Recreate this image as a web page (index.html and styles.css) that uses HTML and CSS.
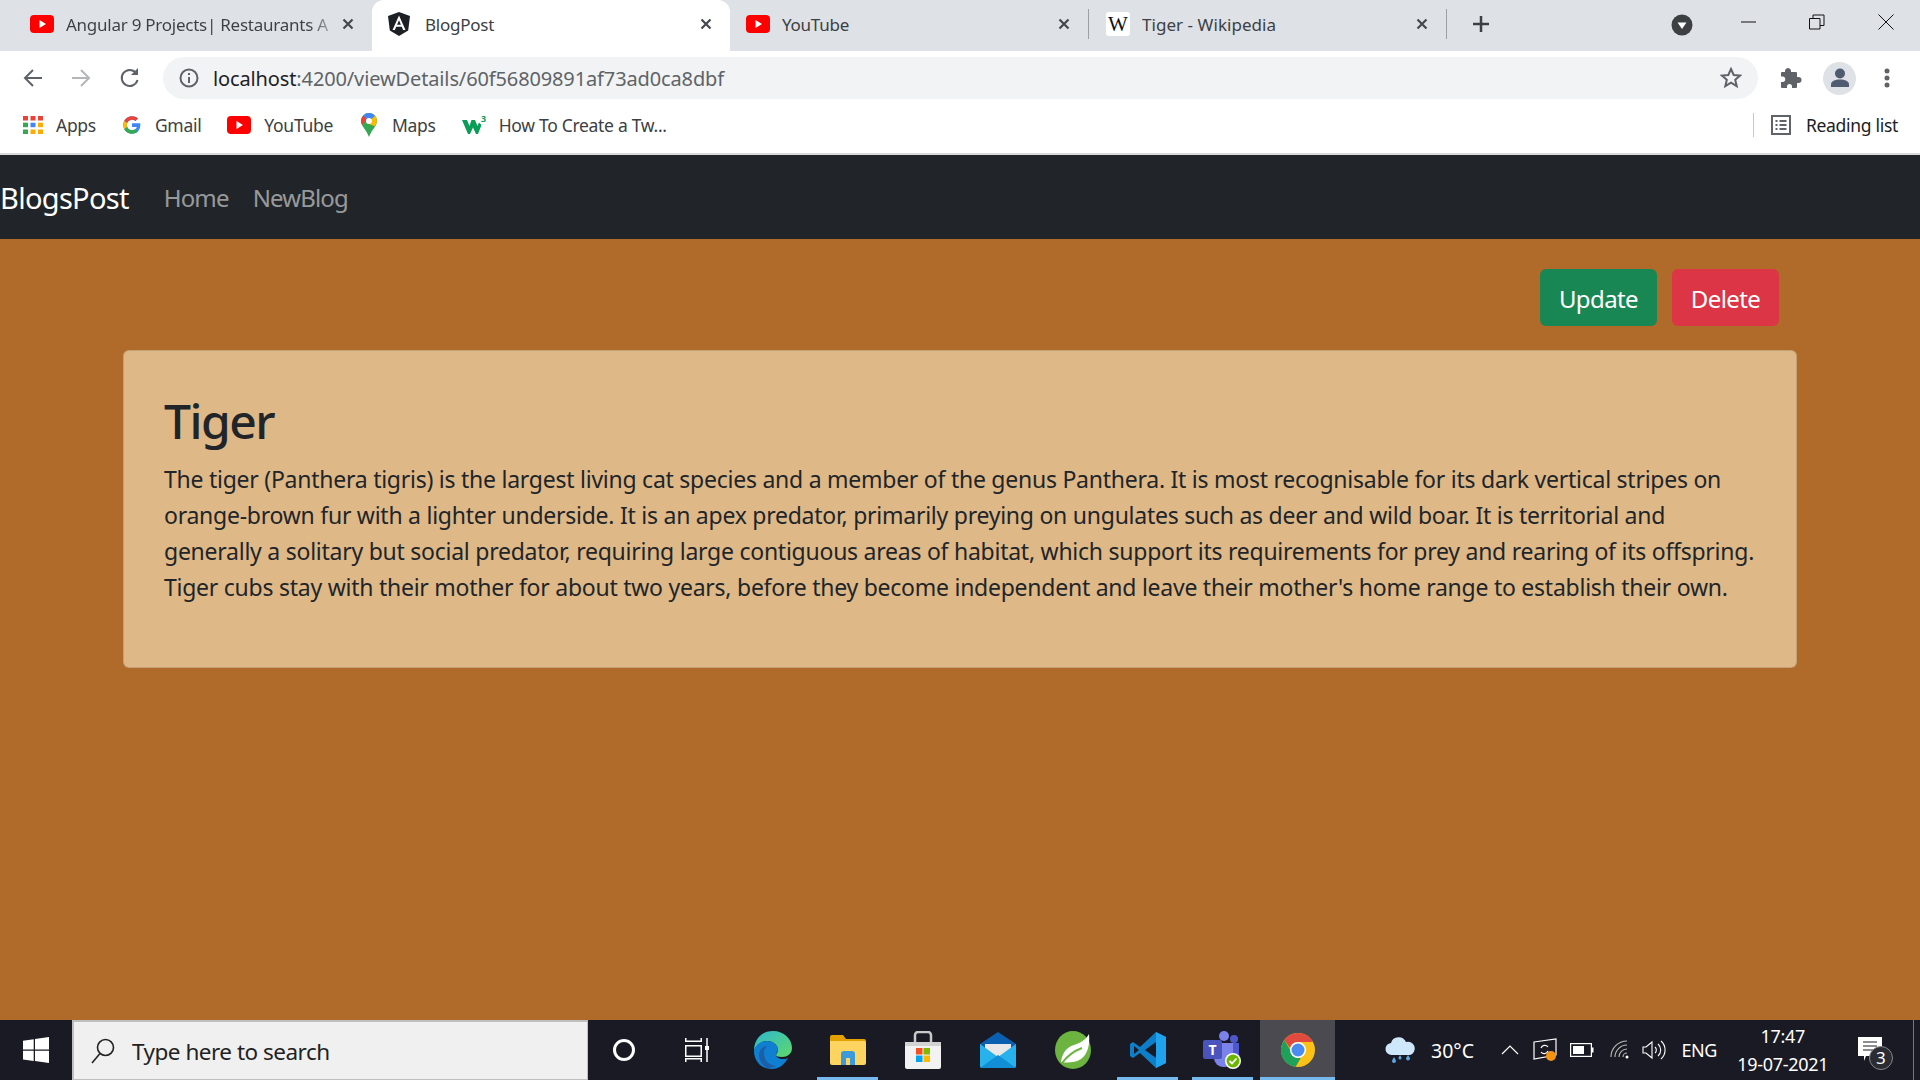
FILE: index.html
```html
<!DOCTYPE html>
<html lang="en">
<head>
  <meta charset="UTF-8" />
  <title>BlogPost</title>
  <link rel="stylesheet" href="styles.css">
</head>
<body>
  <svg class="defs" width="0" height="0">
    <symbol id="yt" viewBox="0 0 24 18">
      <rect width="24" height="18" rx="4" fill="#f00"/>
      <path d="M9.500 5l6.500 4-6.500 4z" fill="#fff"/>
    </symbol>
    <symbol id="x" viewBox="0 0 12 12">
      <path d="M1.500 1.500l9 9M10.500 1.500l-9 9" stroke="#45484d" stroke-width="2.200" fill="none"/>
    </symbol>
  </svg>

  <!-- browser chrome -->
  <div class="tabstrip">
    <div class="tab">
      <svg class="fav" width="24" height="18"><use href="#yt"/></svg>
      <span class="tab-title fade">Angular 9 Projects| Restaurants A</span>
      <svg class="tab-x" width="12" height="12"><use href="#x"/></svg>
    </div>
    <div class="tab active">
      <svg class="fav" width="24" height="24" viewBox="0 0 24 24">
        <path d="M12 0L1 4l1.800 14.500L12 24l9.200-5.500L23 4z" fill="#1d2126"/>
        <path d="M12 3.500L5.500 18h2.400l1.300-3.300h5.600l1.300 3.300h2.400zM13.900 12.700h-3.800L12 8.200z" fill="#fff"/>
      </svg>
      <span class="tab-title">BlogPost</span>
      <svg class="tab-x" width="12" height="12"><use href="#x"/></svg>
    </div>
    <div class="tab">
      <svg class="fav" width="24" height="18"><use href="#yt"/></svg>
      <span class="tab-title">YouTube</span>
      <svg class="tab-x" width="12" height="12"><use href="#x"/></svg>
    </div>
    <div class="tab sep">
      <span class="wiki">W</span>
      <span class="tab-title">Tiger - Wikipedia</span>
      <svg class="tab-x" width="12" height="12"><use href="#x"/></svg>
    </div>
    <div class="sep-line"></div>
    <svg class="plus" width="18" height="18" viewBox="0 0 18 18">
      <path d="M9 1v16M1 9h16" stroke="#3c4043" stroke-width="2.500"/>
    </svg>
    <svg class="tab-search" width="22" height="22" viewBox="0 0 22 22">
      <circle cx="11" cy="11" r="10.500" fill="#3c4043"/>
      <path d="M6.500 8.500h9L11 15z" fill="#fff"/>
    </svg>
    <svg class="win-btn first" width="16" height="16" viewBox="0 0 16 16"><path d="M0 8h15" stroke="#111"/></svg>
    <svg class="win-btn" width="16" height="16" viewBox="0 0 16 16" fill="none" stroke="#111">
      <path d="M.5 4.500h10.500v10.500H.5zM4 4.500V1h11v10.500h-4"/>
    </svg>
    <svg class="win-btn" width="16" height="16" viewBox="0 0 16 16"><path d="M.5.500l15 15M15.500.500l-15 15" stroke="#111" fill="none"/></svg>
  </div>

  <div class="toolbar">
    <svg class="nav-ico" width="20" height="20" viewBox="0 0 20 20" fill="none" stroke="#5f6368" stroke-width="2">
      <path d="M19 10H2M10 2l-8 8 8 8"/>
    </svg>
    <svg class="nav-ico" width="20" height="20" viewBox="0 0 20 20" fill="none" stroke="#b4b7ba" stroke-width="2">
      <path d="M1 10h17M10 2l8 8-8 8"/>
    </svg>
    <svg class="nav-ico" width="22" height="22" viewBox="0 0 22 22" fill="none" stroke="#5f6368" stroke-width="2">
      <path d="M18.500 13a8 8 0 1 1-1.600-7.200"/>
      <path d="M19 1v7h-7z" fill="#5f6368" stroke="none"/>
    </svg>
    <div class="omnibox">
      <svg width="20" height="20" viewBox="0 0 20 20" fill="none" stroke="#5f6368" stroke-width="2">
        <circle cx="10" cy="10" r="8.500"/><path d="M10 9v6M10 5v2"/>
      </svg>
      <span class="url"><b>localhost</b>:4200/viewDetails/60f56809891af73ad0ca8dbf</span>
      <svg class="star" width="22" height="22" viewBox="0 0 22 22" fill="none" stroke="#5f6368" stroke-width="2">
        <path d="M11 2l2.700 6 6.300.600-4.800 4.200 1.500 6.300-5.700-3.400-5.700 3.400 1.500-6.300L2 8.600 8.300 8z"/>
      </svg>
    </div>
    <svg class="puzzle" width="22" height="22" viewBox="0 0 22 22">
      <path d="M8 1a3 3 0 0 1 3 2.500V5h5a1 1 0 0 1 1 1v4h1.500a3 3 0 0 1 0 6H17v4a1 1 0 0 1-1 1h-4v-1.500a2.500 2.500 0 0 0-5 0V21H2a1 1 0 0 1-1-1v-5h1.500a2.700 2.700 0 0 0 0-5.500H1V6a1 1 0 0 1 1-1h3V3.500A3 3 0 0 1 8 1z" fill="#5f6368"/>
    </svg>
    <div class="avatar">
      <svg width="20" height="20" viewBox="0 0 20 20" fill="#4f5b70">
        <circle cx="10" cy="5.500" r="5"/><path d="M1 19v-2.500C1 13 5 11.500 10 11.500s9 1.500 9 5V19z"/>
      </svg>
    </div>
    <svg class="dots" width="6" height="20" viewBox="0 0 6 20" fill="#5f6368">
      <circle cx="3" cy="3" r="2.500"/><circle cx="3" cy="10" r="2.500"/><circle cx="3" cy="17" r="2.500"/>
    </svg>
  </div>

  <div class="bookmarks">
    <svg class="bm-ico" width="20" height="18" viewBox="0 0 20 18">
      <rect x="0" y="0" width="5" height="4.500" fill="#ea4335"/><rect x="7.500" y="0" width="5" height="4.500" fill="#ea4335"/><rect x="15" y="0" width="5" height="4.500" fill="#ea4335"/>
      <rect x="0" y="6.700" width="5" height="4.500" fill="#34a853"/><rect x="7.500" y="6.700" width="5" height="4.500" fill="#4285f4"/><rect x="15" y="6.700" width="5" height="4.500" fill="#fbab05"/>
      <rect x="0" y="13.500" width="5" height="4.500" fill="#34a853"/><rect x="7.500" y="13.500" width="5" height="4.500" fill="#fbab05"/><rect x="15" y="13.500" width="5" height="4.500" fill="#fbab05"/>
    </svg>
    <span class="bm-label">Apps</span>
    <svg class="bm-ico gap" width="20" height="20" viewBox="0 0 48 48">
      <path d="M44 20H24v8.500h11.500C34 33.500 29.500 36.500 24 36.500c-7 0-12.500-5.600-12.500-12.500S17 11.500 24 11.500c3.100 0 6 1.100 8.200 3l6.100-6.100C34.500 5 29.500 3 24 3 12.400 3 3 12.400 3 24s9.400 21 21 21c10.500 0 20-7.500 20-21 0-1.300-.1-2.700-.5-4z" fill="#4285f4"/>
      <path d="M5.400 14.300l7 5.100C14.300 14.800 18.800 11.500 24 11.500c3.100 0 6 1.100 8.200 3l6.100-6.100C34.500 5 29.500 3 24 3 16 3 9 7.600 5.400 14.300z" fill="#ea4335"/>
      <path d="M24 45c5.400 0 10.300-1.800 14.100-5.200l-6.600-5.500c-2 1.400-4.600 2.200-7.500 2.200-5.500 0-10-3.300-11.600-8.400l-7 5.400C8.900 40.300 15.900 45 24 45z" fill="#34a853"/>
      <path d="M5.400 14.300C3.900 17.200 3 20.500 3 24s.9 6.700 2.400 9.500l7-5.400c-.4-1.300-.9-2.700-.9-4.100s.3-3.200.9-4.600z" fill="#fbbc05"/>
    </svg>
    <span class="bm-label">Gmail</span>
    <svg class="bm-ico gap" width="24" height="18"><use href="#yt"/></svg>
    <span class="bm-label">YouTube</span>
    <svg class="bm-ico gap" width="20" height="24" viewBox="-2 0 20 24">
      <path d="M8 0a8 8 0 0 1 8 8c0 5-5 8-8 16-3-8-8-11-8-16a8 8 0 0 1 8-8z" fill="#34a853"/>
      <path d="M2.300 2.400A8 8 0 0 0 0 8c0 1.500.5 2.800 1.200 4l4.600-5.700z" fill="#ea4335"/>
      <path d="M2.300 2.400A8 8 0 0 1 8 0a8 8 0 0 1 6 2.700L10 6.500A3 3 0 0 0 5.800 6.300z" fill="#4285f4"/>
      <path d="M14 2.700A8 8 0 0 1 16 8c0 1.500-1 3.500-2.300 5.300L5.600 10 10 6.500z" fill="#fbbc05"/>
      <circle cx="8" cy="8" r="3" fill="#fff"/>
    </svg>
    <span class="bm-label">Maps</span>
    <svg class="bm-ico gap" width="24" height="18" viewBox="0 0 24 18">
      <path d="M0 4h5l2.500 6L9.500 4h3.500l2.500 6L17 6.500 19.500 9l-3.500 9h-2l-3-6.500L8 18H6z" fill="#0a9d58"/>
      <text x="19" y="6" class="w3-sup">3</text>
    </svg>
    <span class="bm-label">How To Create a Tw...</span>
    <div class="reading">
      <svg width="20" height="20" viewBox="0 0 20 20" fill="none" stroke="#5f6368" stroke-width="2">
        <rect x="1" y="1" width="18" height="18"/><path d="M4.500 6h2M4.500 10h2M4.500 14h2M8.500 6h7M8.500 10h7M8.500 14h7"/>
      </svg>
      <span class="bm-label">Reading list</span>
    </div>
  </div>

  <!-- the blog app -->
  <nav class="navbar">
    <a class="brand">BlogsPost</a>
    <a class="nav-link">Home</a>
    <a class="nav-link">NewBlog</a>
  </nav>

  <main class="content">
    <div class="actions">
      <button class="btn btn-update">Update</button>
      <button class="btn btn-delete">Delete</button>
    </div>
    <div class="card">
      <h2>Tiger</h2>
      <p>The tiger (Panthera tigris) is the largest living cat species and a member of the genus Panthera. It is most recognisable for its dark vertical stripes on<br>orange-brown fur with a lighter underside. It is an apex predator, primarily preying on ungulates such as deer and wild boar. It is territorial and<br>generally a solitary but social predator, requiring large contiguous areas of habitat, which support its requirements for prey and rearing of its offspring.<br>Tiger cubs stay with their mother for about two years, before they become independent and leave their mother's home range to establish their own.</p>
    </div>
  </main>

  <!-- windows taskbar -->
  <footer class="taskbar">
    <div class="start">
      <svg width="26" height="26" viewBox="0 0 26 26" fill="#fff">
        <path d="M0 3.700l10.700-1.500v10.300H0zM12 2l14-2v12.500H12zM0 13.800h10.700v10.300L0 22.600zM12 13.800h14V26l-14-2z"/>
      </svg>
    </div>
    <div class="search">
      <svg width="24" height="26" viewBox="0 0 24 26" fill="none" stroke="#222" stroke-width="1.600">
        <circle cx="14.500" cy="9.500" r="8"/><path d="M9 15.500L1 25"/>
      </svg>
      <span>Type here to search</span>
    </div>
    <div class="slot cortana">
      <svg width="24" height="24" viewBox="0 0 24 24"><circle cx="12" cy="12" r="9.500" fill="none" stroke="#fff" stroke-width="3"/></svg>
    </div>
    <div class="slot">
      <svg class="taskview" width="24" height="24" viewBox="0 0 24 24" fill="none" stroke="#fff" stroke-width="1.500">
        <path d="M.75 0v3.250h15.500V0M.75 7.750h15.500v10.500H.75zM.75 24v-3.250h15.500V24M22 0v24"/>
        <rect x="20" y="8" width="4" height="4" fill="#fff" stroke="none"/>
      </svg>
    </div>
    <div class="slot">
      <svg width="38" height="38" viewBox="0 0 38 38">
        <defs>
          <linearGradient id="edgeA" x1="0" y1="0" x2="1" y2="1"><stop offset="0" stop-color="#2fb8cf"/><stop offset="1" stop-color="#5fd86a"/></linearGradient>
        </defs>
        <path d="M19 0c11 0 19 8 19 17 0 6-5 9-10 9-4 0-6-1-6-2 0-1 2-2 2-5 0-5-5-9-11-9C7 10 1 15 0 20 0 8 8 0 19 0z" fill="url(#edgeA)"/>
        <path d="M0 20c1-6 7-10 13-10 6 0 11 4 11 9 0 2-2 3-2 5 0 2 3 4 7 4 2 0 3 0 5-1-4 7-9 11-16 11C7 38 0 30 0 20z" fill="#0f7fd1"/>
        <path d="M14 37c-6-2-9-8-9-13 0-5 4-9 8-9-3 3-4 6-2 12 1 4 5 7 11 8-2 1-5 2-8 2z" fill="#1b5fa8"/>
      </svg>
    </div>
    <div class="slot open">
      <svg width="36" height="32" viewBox="0 0 36 32">
        <path d="M0 3a2 2 0 0 1 2-2h11l3 4h18a2 2 0 0 1 2 2v2H0z" fill="#e5a100"/>
        <path d="M0 7h34a2 2 0 0 1 2 2v20a2 2 0 0 1-2 2H2a2 2 0 0 1-2-2z" fill="#fcd45f"/>
        <path d="M11 31V20a3 3 0 0 1 3-3h8a3 3 0 0 1 3 3v11h-5v-7h-4v7z" fill="#3b9ad9"/>
      </svg>
    </div>
    <div class="slot">
      <svg width="36" height="38" viewBox="0 0 36 38">
        <path d="M10 11V4a3 3 0 0 1 3-3h10a3 3 0 0 1 3 3v7" fill="none" stroke="#c9c9c9" stroke-width="2.500"/>
        <path d="M0 11h36v25a2 2 0 0 1-2 2H2a2 2 0 0 1-2-2z" fill="#f2f2f2"/>
        <path d="M0 11h36v4H0z" fill="#d2d2d2"/>
        <rect x="11" y="17" width="6.500" height="6.500" fill="#f25022"/><rect x="18.500" y="17" width="6.500" height="6.500" fill="#7fba00"/>
        <rect x="11" y="24.500" width="6.500" height="6.500" fill="#00a4ef"/><rect x="18.500" y="24.500" width="6.500" height="6.500" fill="#ffb900"/>
      </svg>
    </div>
    <div class="slot">
      <svg width="36" height="36" viewBox="0 0 36 36">
        <path d="M0 12L18 0l18 12v10H0z" fill="#0a5fb0"/>
        <path d="M5 12h26v12H5z" fill="#e8e8e8"/>
        <path d="M0 12l18 13 18-13v22a2 2 0 0 1-2 2H2a2 2 0 0 1-2-2z" fill="#27b2ee"/>
        <path d="M0 36l18-13 18 13z" fill="#128ed6"/>
      </svg>
    </div>
    <div class="slot">
      <svg width="36" height="38" viewBox="0 0 36 38">
        <ellipse cx="18" cy="19" rx="18" ry="19" fill="#6db33f"/>
        <path d="M34 3c1 10-1 20-8 25-6 4-14 4-20 3 1-8 5-15 13-17 6-2 12-5 15-11z" fill="#fff"/>
        <path d="M7 32c6-8 12-12 20-15" fill="none" stroke="#6db33f" stroke-width="2"/>
      </svg>
    </div>
    <div class="slot open">
      <svg width="36" height="36" viewBox="0 0 36 36">
        <path d="M26 0l10 5v26l-10 5-16-15-7 5-3-2V12l3-2 7 5z" fill="#0d7ec8"/>
        <path d="M26 0l10 5v26l-10 5z" fill="#1fa3ec"/>
        <path d="M26 10l-11 8 11 8z" fill="#1a1a24"/>
        <path d="M4 14l5 4-5 4z" fill="#1a1a24"/>
      </svg>
    </div>
    <div class="slot open">
      <svg width="40" height="40" viewBox="0 0 40 40">
        <circle cx="21" cy="6" r="5" fill="#7b83eb"/>
        <circle cx="31" cy="9" r="4" fill="#4f58ca"/>
        <path d="M26 13h10v12a5 5 0 0 1-5 5h-5z" fill="#4f58ca"/>
        <path d="M11 13h19v16a8 8 0 0 1-8 8h-2a9 9 0 0 1-9-9z" fill="#7b83eb"/>
        <rect x="0" y="10" width="19" height="19" rx="2" fill="#4b53bc"/>
        <text x="9.500" y="25" class="teams-t">T</text>
        <circle cx="30" cy="31" r="8" fill="#fff"/>
        <circle cx="30" cy="31" r="6.500" fill="#6bb700"/>
        <path d="M26.500 31l2.500 2.500 4.500-5" fill="none" stroke="#fff" stroke-width="1.800"/>
      </svg>
    </div>
    <div class="slot open active">
      <svg width="34" height="34" viewBox="0 0 34 34">
        <circle cx="17" cy="17" r="17" fill="#fbc116"/>
        <path d="M17 0a17 17 0 0 1 15 9H17a8 8 0 0 0-7.800 6.200L3.300 7A17 17 0 0 1 17 0z" fill="#e04a3f"/>
        <path d="M3.300 7l8 13.500a8 8 0 0 0 8.700 3.900L14.500 34A17 17 0 0 1 3.300 7z" fill="#1fa15a"/>
        <circle cx="17" cy="17" r="8" fill="#fff"/>
        <circle cx="17" cy="17" r="6.500" fill="#4a8cf0"/>
      </svg>
    </div>
    <div class="tray">
      <svg class="tray-weather" width="32" height="28" viewBox="0 0 32 28">
        <path d="M7 19a6 6 0 0 1-1-12 8 8 0 0 1 15-1 6.500 6.500 0 0 1 4 13z" fill="#cfe7fb"/>
        <path d="M9 21c-1 2-2 3-2 4a2 2 0 0 0 4 0c0-1-1-2-2-4zM15 19c-1 2-1.500 2-1.500 3a1.500 1.500 0 0 0 3 0c0-1-.5-1-1.500-3zM23 19c-1 2-2 2.500-2 3.500a2 2 0 0 0 4 0c0-1-1-1.500-2-3.500z" fill="#5aa9e6"/>
      </svg>
      <span class="tray-temp">30°C</span>
      <svg class="tray-up" width="18" height="10" viewBox="0 0 18 10"><path d="M1 9l8-8 8 8" fill="none" stroke="#fff" stroke-width="1.200"/></svg>
      <svg class="tray-sync" width="24" height="24" viewBox="0 0 24 24" fill="none" stroke="#fff" stroke-width="1.200">
        <path d="M1 4l22-3v16l-22 4z"/><path d="M8 10a4 4 0 0 1 7-1M15 13a4 4 0 0 1-7 1"/>
        <circle cx="18" cy="18" r="5" fill="#f7930e" stroke="none"/>
      </svg>
      <svg class="tray-batt" width="24" height="14" viewBox="0 0 24 14">
        <rect x=".6" y=".6" width="20.800" height="12.800" fill="none" stroke="#fff" stroke-width="1.200"/>
        <rect x="3" y="3" width="11" height="8" fill="#fff"/><rect x="22" y="4.500" width="1.500" height="5" fill="#fff"/>
      </svg>
      <svg class="tray-wifi" width="20" height="20" viewBox="0 0 20 20" fill="none" stroke="#bbb" stroke-width="1.100">
        <path d="M1 17A16 16 0 0 1 17 1M5 17A12 12 0 0 1 17 5M9 17a8 8 0 0 1 8-8M13 17a4 4 0 0 1 4-4"/>
        <circle cx="17" cy="17" r="1.500" fill="#fff" stroke="none"/>
      </svg>
      <svg class="tray-vol" width="24" height="20" viewBox="0 0 24 20" fill="none" stroke="#fff" stroke-width="1.100">
        <path d="M1 7h3l6-5v16l-6-5H1zM13 7a4 4 0 0 1 0 6M16 4a8 8 0 0 1 0 12M19 1a12 12 0 0 1 0 18"/>
      </svg>
      <span class="tray-lang">ENG</span>
      <div class="clock"><span>17:47</span><span>19-07-2021</span></div>
      <div class="notif">
        <svg width="24" height="26" viewBox="0 0 24 26">
          <path d="M0 0h24v19H8l-2 5v-5H0z" fill="#fff"/>
          <path d="M5 5h14M5 9h14M5 13h14" stroke="#1a1a24" stroke-width="1"/>
        </svg>
        <span class="badge">3</span>
      </div>
      <div class="show-desktop"></div>
    </div>
  </footer>
</body>
</html>
```
FILE: styles.css
```css
* {
  box-sizing: border-box;
}

html, body {
  height: 100%;
}

body {
  margin: 0;
  display: flex;
  flex-direction: column;
  overflow: hidden;
  background-color: #b06a2a;
  font-family: 'Noto Sans', 'Open Sans', sans-serif;
  color: #212529;
}

.defs {
  position: absolute;
}

/* tabs */
.tabstrip {
  height: 51px;
  flex: none;
  display: flex;
  align-items: center;
  padding-left: 14px;
  background-color: #dee1e6;
}

.tab {
  width: 358px;
  height: 51px;
  flex: none;
  display: flex;
  align-items: center;
  padding: 0 18px 3px 16px;
  font-size: 17px;
  color: #3c4043;
}

.tab.active {
  padding-left: 15px;
  background-color: #fff;
  border-radius: 12px 12px 0 0;
}

.tab.active .tab-title {
  margin-left: 14px;
}

.tab.sep {
  border-left: 1px solid #9aa0a6;
  background-clip: padding-box;
  height: 30px;
  margin-top: -3px;
  padding: 0 18px 0 17px;
}

.tab.sep .tab-title {
  letter-spacing: 0.05px;
}

.tab-title {
  flex: 1;
  margin-left: 12px;
  white-space: nowrap;
  overflow: hidden;
  letter-spacing: -0.25px;
}

.fade {
  color: transparent;
  background: linear-gradient(90deg, #3c4043 88%, #dee1e6 100%);
  -webkit-background-clip: text;
  background-clip: text;
}

.fav, .tab-x {
  flex: none;
}

.wiki {
  width: 24px;
  height: 24px;
  flex: none;
  border-radius: 3px;
  background-color: #fff;
  color: #111;
  font: 21px/24px 'Liberation Serif', serif;
  text-align: center;
}

.sep-line {
  width: 1px;
  height: 30px;
  flex: none;
  margin-top: -3px;
  background-color: #9aa0a6;
}

.plus {
  flex: none;
  margin: -3px 0 0 25px;
}

.tab-search {
  flex: none;
  margin: -1px 0 0 181px;
}

.win-btn {
  flex: none;
  margin: -8px 0 0 52px;
}

.win-btn:last-child {
  margin-left: 53px;
}

.win-btn.first {
  margin-left: 48px;
}

/* toolbar */
.toolbar {
  height: 52px;
  flex: none;
  display: flex;
  align-items: center;
  padding: 2px 0 0 23px;
  background-color: #fff;
}

.nav-ico {
  flex: none;
  margin-right: 28px;
}

.omnibox {
  width: 1595px;
  height: 42px;
  flex: none;
  display: flex;
  align-items: center;
  margin: 0 0 0 -6px;
  padding: 0 16px 0 16px;
  border-radius: 21px;
  background-color: #f1f3f4;
}

.url {
  flex: 1;
  margin-left: 14px;
  font-size: 20px;
  letter-spacing: -0.13px;
  color: #5f6368;
}

.url b {
  font-weight: 400;
  color: #202124;
}

.puzzle {
  flex: none;
  margin-left: 22px;
}

.avatar {
  width: 33px;
  height: 33px;
  flex: none;
  display: flex;
  align-items: center;
  justify-content: center;
  margin-left: 21px;
  border-radius: 50%;
  background-color: #dee1e6;
}

.dots {
  flex: none;
  margin-left: 28px;
}

/* bookmarks */
.bookmarks {
  height: 50px;
  flex: none;
  display: flex;
  align-items: center;
  padding: 0 0 7px 23px;
  background-color: #fff;
  font-size: 17.500px;
  color: #3c4043;
}

.bm-ico {
  flex: none;
}

.bm-ico.gap {
  margin-left: 26px;
}

.bm-label {
  margin-left: 13px;
  white-space: nowrap;
  letter-spacing: -0.3px;
}

.w3-sup {
  font: 700 9px 'Noto Sans', sans-serif;
  fill: #0a9d58;
}

.reading {
  display: flex;
  align-items: center;
  height: 24px;
  margin-left: auto;
  margin-right: 22px;
  padding-left: 17px;
  border-left: 1px solid #c8c8c8;
}

.reading .bm-label {
  margin-left: 15px;
  color: #202124;
}

/* app */
.navbar {
  height: 86px;
  flex: none;
  display: flex;
  align-items: center;
  border-top: 2px solid #d9d9d9;
  background-color: #212529;
}

.brand {
  font-size: 29px;
  color: #fff;
  letter-spacing: -0.7px;
}

.nav-link {
  margin-left: 24px;
  font-size: 24px;
  color: rgba(255, 255, 255, 0.55);
  letter-spacing: -0.85px;
}

.brand + .nav-link {
  margin-left: 35px;
}

.content {
  flex: 1;
  padding: 30px 123px 0;
}

.actions {
  display: flex;
  justify-content: flex-end;
  gap: 15px;
  padding-right: 18px;
}

.btn {
  height: 57px;
  padding: 2px 0 0;
  border: none;
  border-radius: 6px;
  font-family: inherit;
  font-size: 24px;
  letter-spacing: -0.6px;
  color: #fff;
}

.btn-update {
  width: 117px;
  background-color: #198754;
}

.btn-delete {
  width: 107px;
  background-color: #dc3545;
}

.card {
  height: 318px;
  margin-top: 24px;
  padding: 36px 40px;
  border: 1px solid rgba(0, 0, 0, 0.125);
  border-radius: 6px;
  background-color: #deb887;
}

h2 {
  margin: 0 0 6px;
  font-size: 48px;
  font-weight: 500;
  line-height: 68px;
  letter-spacing: -1.500px;
}

p {
  margin: 0;
  font-size: 23px;
  line-height: 36px;
  white-space: nowrap;
  letter-spacing: -0.25px;
}

/* taskbar */
.taskbar {
  height: 60px;
  flex: none;
  display: flex;
  align-items: center;
  background-color: #1a1a24;
}

.start {
  width: 72px;
  display: flex;
  justify-content: center;
}

.search {
  width: 516px;
  height: 60px;
  flex: none;
  display: flex;
  align-items: center;
  padding: 1px 0 0 17px;
  border: 2px solid #bfbfbf;
  border-right-width: 1px;
  border-bottom-width: 1px;
  background-color: #f0f0f0;
  font-size: 22.500px;
  color: #222;
}

.search span {
  margin-left: 17px;
  letter-spacing: -0.5px;
}

.slot {
  width: 75px;
  height: 60px;
  flex: none;
  display: flex;
  align-items: center;
  justify-content: center;
}

.slot.cortana {
  width: 72px;
}

.taskview {
  margin-left: -2px;
}

.slot.open {
  background: linear-gradient(#76b9ed, #76b9ed) center bottom / 61px 3px no-repeat;
}

.slot.active {
  background: linear-gradient(#76b9ed, #76b9ed) center bottom / 100% 3px no-repeat, #4a4a50;
}

.teams-t {
  font: 700 14px 'Noto Sans', sans-serif;
  fill: #fff;
  text-anchor: middle;
}

.tray {
  flex: 1;
  display: flex;
  align-items: center;
  height: 60px;
  font-size: 18px;
  color: #fff;
}

.tray-weather {
  margin-left: 50px;
}

.tray-temp {
  margin-left: 14px;
  font-size: 19.500px;
}

.tray-up {
  margin-left: 27px;
}

.tray-sync {
  margin-left: 14.500px;
}

.tray-batt {
  margin-left: 13px;
}

.tray-wifi {
  margin-left: 15.500px;
}

.tray-vol {
  margin-left: 12.500px;
}

.tray-lang {
  margin-left: 15px;
  letter-spacing: -0.5px;
}

.clock {
  width: 108px;
  margin-left: 12px;
  display: flex;
  flex-direction: column;
  align-items: center;
  gap: 5px;
  line-height: 23px;
  letter-spacing: -0.3px;
}

.notif {
  position: relative;
  margin-left: 21px;
  display: flex;
}

.badge {
  position: absolute;
  right: -11px;
  bottom: -7px;
  width: 24px;
  height: 24px;
  border: 1px solid #888;
  border-radius: 50%;
  background-color: #2b2b33;
  font-size: 17px;
  line-height: 21px;
  text-align: center;
}

.show-desktop {
  width: 1px;
  height: 60px;
  margin-left: auto;
  margin-right: 6px;
  background-color: #777;
}
```
